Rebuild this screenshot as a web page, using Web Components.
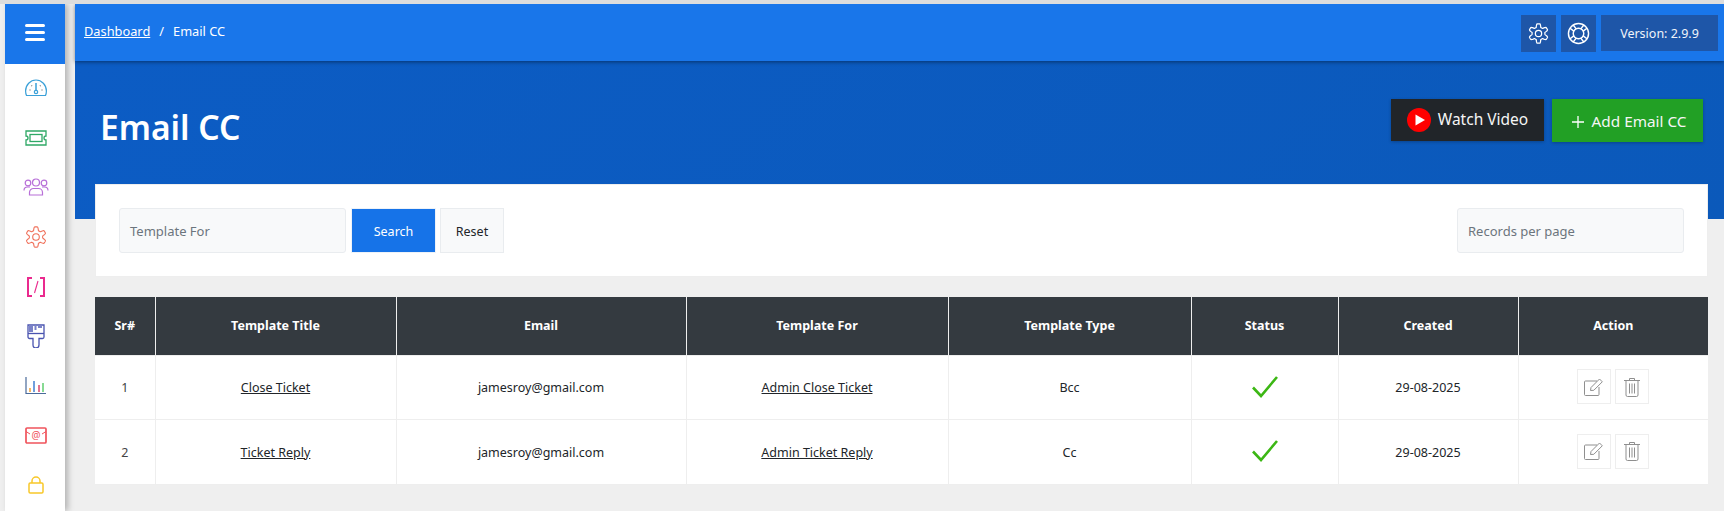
<!DOCTYPE html>
<html>
<head>
<meta charset="utf-8">
<title>Email CC</title>
<style>
  html, body { margin: 0; height: 100%; overflow: hidden; }
  body { background: #efefef; border-top: 4px solid #ddd; box-sizing: border-box; font-family: "Noto Sans", "Open Sans", sans-serif; }
</style>
</head>
<body>
<app-shell>
  <side-nav slot="nav">
    <nav-item><svg viewBox="0 0 22 18" width="22" height="18" fill="none" stroke="#3aa0d8" stroke-width="1.2"><path d="M1.500 16.500C.8 15 .6 13.500.6 12 .6 6 5.300 1 11 1s10.400 5 10.400 11c0 1.500-.2 3-.9 4.500z"/><path d="M11 4v7" stroke-width="1.500"/><circle cx="11" cy="13" r="1.700"/><path d="M4.500 11h1M16.500 11h1M6.500 6.500l.5.500M15.500 6.500l-.5.500" stroke="#555"/></svg></nav-item>
    <nav-item><svg viewBox="0 0 22 16" width="22" height="16" fill="none" stroke="#2fa866" stroke-width="1.300"><path d="M1 1h20v5a2 2 0 0 0 0 4v5H1v-5a2 2 0 0 0 0-4z"/><rect x="5" y="4.500" width="12" height="7"/></svg></nav-item>
    <nav-item><svg viewBox="0 0 26 18" width="26" height="18" fill="none" stroke="#b86fd8" stroke-width="1.200"><circle cx="13" cy="4.500" r="3.500"/><circle cx="5" cy="5" r="2.800"/><circle cx="21" cy="5" r="2.800"/><path d="M6.500 17v-2.500a4 4 0 0 1 4-4h5a4 4 0 0 1 4 4V17z"/><path d="M1 12.500c0-2 1.500-3.500 3.500-3.500H7M25 12.500c0-2-1.500-3.500-3.500-3.500H19"/></svg></nav-item>
    <nav-item><gear-icon size="22" colour="#f0705a" width="1.2"></gear-icon></nav-item>
    <nav-item><svg viewBox="0 0 18 20" width="18" height="20" fill="none" stroke="#ea2a8e" stroke-width="2"><path d="M5 1H1v18h4M13 1h4v18h-4"/><path d="M11 4 7.500 16" stroke-width="1.100"/></svg></nav-item>
    <nav-item><svg viewBox="0 0 18 24" width="18" height="24" fill="none" stroke="#4a54b0" stroke-width="1.300"><path d="M1 1h16v12a1.500 1.500 0 0 1-1.500 1.500H12v6.500a3 3 0 0 1-6 0v-6.500H2.500A1.500 1.500 0 0 1 1 13z"/><path d="M1 9.500h16"/><path d="M2 1h4v7H2zM7.500 1h2v5h-2zM11 1h4v3h-4z" fill="#7a82c8" stroke="none"/></svg></nav-item>
    <nav-item><svg viewBox="0 0 22 18" width="22" height="18" fill="none" stroke-width="1.500"><path d="M1 0v16.500h20" stroke="#4a6a9a" stroke-width="1.200"/><path d="M5 11v4" stroke="#f5a030"/><path d="M9 4v11" stroke="#3f7fd0"/><path d="M14 8v7" stroke="#d8456a"/><path d="M18 6v9" stroke="#5fce6f"/></svg></nav-item>
    <nav-item><svg viewBox="0 0 22 17" width="22" height="17" fill="none" stroke="#f0545c" stroke-width="1.700"><rect x="1" y="1" width="20" height="15" rx="1"/><path d="M1 4.500l4 2.500M21 4.500l-4 2.500" stroke-width="1"/><text x="11" y="12" text-anchor="middle" font-size="10" font-family="Noto Sans, sans-serif" fill="#f0545c" stroke="none">@</text></svg></nav-item>
    <nav-item><svg viewBox="0 0 16 18" width="16" height="18" fill="none" stroke="#f8c82a" stroke-width="1.500"><rect x="1" y="7" width="14" height="10" rx="1.200"/><path d="M4 7V5a4 4 0 0 1 8 0v2"/></svg></nav-item>
  </side-nav>
  <top-bar>
    <a slot="crumbs" href="#">Dashboard</a>
    <span slot="crumbs">/</span>
    <span slot="crumbs">Email CC</span>
    <tool-tile slot="tools"><gear-icon size="21" colour="#fff" width="1.4"></gear-icon></tool-tile>
    <tool-tile slot="tools"><svg viewBox="0 0 24 24" width="23" height="23" fill="none" stroke="#fff" stroke-width="1.500"><circle cx="12" cy="12" r="10.500"/><circle cx="12" cy="12" r="5.500"/><path d="M6.500 3.200l3.300 4.200M3.200 6.500l4.200 3.300M17.500 3.200l-3.300 4.200M20.800 6.500l-4.200 3.300M6.500 20.800l3.300-4.200M3.200 17.500l4.200-3.300M17.500 20.800l-3.300-4.200M20.800 17.500l-4.200-3.300"/></svg></tool-tile>
    <version-tag slot="tools">Version: 2.9.9</version-tag>
  </top-bar>
  <page-hero>
    <span slot="title">Email CC</span>
    <hero-button slot="actions" tone="dark"><svg slot="icon" viewBox="0 0 24 24" width="24" height="24"><circle cx="12" cy="12" r="12" fill="#f00"/><path d="M8.500 6.500 18 12l-9.500 5.500z" fill="#fff"/></svg>Watch Video</hero-button>
    <hero-button slot="actions" tone="green"><svg slot="icon" viewBox="0 0 12 12" width="12" height="12" stroke="#fff" stroke-width="1.300"><path d="M6 0v12M0 6h12"/></svg>Add Email CC</hero-button>
  </page-hero>
  <search-card></search-card>
  <cc-table></cc-table>
</app-shell>

<script>
  // outline of a six lobed gear, same for the sidebar and the top bar
  function gearPath() {
    let pts = [];
    for (let i = 0; i < 180; i++) {
      let a = i / 180 * Math.PI * 2;
      let t = Math.cos(a * 6);
      let r = 9.2 + 1.9 * Math.max(-1, Math.min(1, t * 1.7));
      pts.push((12 + r * Math.sin(a)).toFixed(2) + ' ' + (12 - r * Math.cos(a)).toFixed(2));
    }
    return 'M' + pts.join('L') + 'z';
  }

  class GearIcon extends HTMLElement {
    connectedCallback() {
      let s = this.getAttribute('size'), c = this.getAttribute('colour'), w = this.getAttribute('width');
      this.attachShadow({ mode: 'open' }).innerHTML = `
        <style>:host { display: inline-flex; }</style>
        <svg viewBox="0 0 24 24" width="${s}" height="${s}" fill="none" stroke="${c}" stroke-width="${w}">
          <path d="${gearPath()}"/>
          <circle cx="12" cy="12" r="3.600"/>
        </svg>`;
    }
  }

  class AppShell extends HTMLElement {
    connectedCallback() {
      this.attachShadow({ mode: 'open' }).innerHTML = `
        <style>
          :host { display: flex; height: 100%; padding-left: 5px; gap: 10px; box-sizing: border-box; }
          main { flex: 1; min-width: 0; display: flex; flex-direction: column; }
        </style>
        <slot name="nav"></slot>
        <main><slot></slot></main>`;
    }
  }

  class SideNav extends HTMLElement {
    connectedCallback() {
      this.attachShadow({ mode: 'open' }).innerHTML = `
        <style>
          :host { display: flex; flex-direction: column; width: 60px; background: #fff; box-shadow: 3px 0 6px rgba(0,0,0,.25); flex: none; z-index: 3; }
          .burger { height: 60px; flex: none; box-sizing: border-box; padding-bottom: 3px; background: #1976ea; display: flex; align-items: center; justify-content: center; }
          .items { margin-top: -1px; display: flex; flex-direction: column; }
        </style>
        <div class="burger">
          <svg width="20" height="17" viewBox="0 0 20 17" stroke="#fff" stroke-width="3" stroke-linecap="round"><path d="M1.500 1.500h17M1.500 8.500h17M1.500 15.500h17"/></svg>
        </div>
        <div class="items"><slot></slot></div>`;
    }
  }

  class NavItem extends HTMLElement {
    connectedCallback() {
      this.attachShadow({ mode: 'open' }).innerHTML = `
        <style>
          :host { display: flex; align-items: center; justify-content: center; height: 49.700px; margin-left: 2px; }
        </style>
        <slot></slot>`;
    }
  }

  class TopBar extends HTMLElement {
    connectedCallback() {
      this.attachShadow({ mode: 'open' }).innerHTML = `
        <style>
          :host { display: flex; align-items: center; justify-content: space-between; height: 57px; flex: none; background: #1976ea; color: #fff; font-size: 12.800px; padding: 0 6px 0 10px; box-shadow: 0 1px 4px rgba(0,0,0,.45); position: relative; z-index: 2; }
          .crumbs { display: flex; gap: 9px; margin: -4px 0 0 -1px; }
          .tools { display: flex; gap: 5px; align-items: flex-start; margin-top: 2px; }
          ::slotted(a) { color: #fff; }
        </style>
        <div class="crumbs"><slot name="crumbs"></slot></div>
        <div class="tools"><slot name="tools"></slot></div>`;
    }
  }

  class ToolTile extends HTMLElement {
    connectedCallback() {
      this.attachShadow({ mode: 'open' }).innerHTML = `
        <style>:host { display: flex; align-items: center; justify-content: center; width: 35px; height: 37px; background: #1e56a8; }</style>
        <slot></slot>`;
    }
  }

  class VersionTag extends HTMLElement {
    connectedCallback() {
      this.attachShadow({ mode: 'open' }).innerHTML = `
        <style>:host { display: flex; align-items: center; justify-content: center; width: 117px; height: 36px; background: #1e56a8; color: #f0f4fa; font-size: 12.500px; }</style>
        <slot></slot>`;
    }
  }

  class PageHero extends HTMLElement {
    connectedCallback() {
      this.attachShadow({ mode: 'open' }).innerHTML = `
        <style>
          :host { display: flex; justify-content: space-between; height: 158px; flex: none; box-sizing: border-box; background: linear-gradient(135deg, #0c5cc4, #0b59ba); color: #fff; padding: 38px 21px 0 25px; }
          h1 { margin: 0; font-size: 33.600px; font-weight: 600; line-height: 56px; }
          .actions { display: flex; gap: 8px; align-items: flex-start; }
        </style>
        <h1><slot name="title"></slot></h1>
        <div class="actions"><slot name="actions"></slot></div>`;
    }
  }

  class HeroButton extends HTMLElement {
    connectedCallback() {
      let dark = this.getAttribute('tone') == 'dark';
      this.attachShadow({ mode: 'open' }).innerHTML = `
        <style>
          :host { display: flex; align-items: center; justify-content: center; box-sizing: border-box; height: ${dark ? 42 : 43}px; width: ${dark ? 153 : 151}px; padding-left: ${dark ? 0 : 3}px; gap: ${dark ? 7 : 8}px; background: ${dark ? '#212529' : '#22a025'}; color: #f5f5f5; font-size: ${dark ? 15.5 : 15.3}px; box-shadow: 0 1px 3px rgba(0,0,0,.25); }
          span { display: block; ${dark ? 'margin-top: -2px;' : ''} }
          .i { display: flex; ${dark ? '' : 'margin-top: 3px;'} }
        </style>
        <div class="i"><slot name="icon"></slot></div><span><slot></slot></span>`;
    }
  }

  class SearchCard extends HTMLElement {
    connectedCallback() {
      this.attachShadow({ mode: 'open' }).innerHTML = `
        <style>
          :host { display: flex; justify-content: space-between; align-items: flex-start; margin: -35px 16px 0 20px; height: 93px; box-sizing: border-box; padding: 23px 23px 0 23px; background: #fff; border: 1px solid #eee; flex: none; position: relative; font-size: 13px; }
          .left { display: flex; }
          .field { width: 227px; height: 45px; box-sizing: border-box; background: #f8f9fa; border: 1px solid #e9ecef; border-radius: 3px; color: #6c757d; padding-left: 10px; display: flex; align-items: center; }
          .btn { height: 45px; box-sizing: border-box; padding-top: 1px; display: flex; align-items: center; justify-content: center; font-size: 12.500px; }
          .go { width: 85px; margin-left: 5px; background: #1673e8; color: #fff; border: 1px solid #edf2f8; }
          .reset { width: 64px; margin-left: 4px; background: #f8f9fa; color: #212529; border: 1px solid #e9ecef; }
        </style>
        <div class="left">
          <div class="field">Template For</div>
          <div class="btn go">Search</div>
          <div class="btn reset">Reset</div>
        </div>
        <div class="field">Records per page</div>`;
    }
  }

  const rows = [
    ['1', 'Close Ticket', 'jamesroy@gmail.com', 'Admin Close Ticket', 'Bcc', '29-08-2025'],
    ['2', 'Ticket Reply', 'jamesroy@gmail.com', 'Admin Ticket Reply', 'Cc', '29-08-2025']
  ];

  class CcTable extends HTMLElement {
    connectedCallback() {
      let check = `<svg width="26" height="24" viewBox="0 0 26 24" fill="none" stroke="#3cb714" stroke-width="2.600"><path d="M1 12.500 9 21 25 2"/></svg>`;
      let edit = `<svg width="20" height="18" viewBox="0 0 20 18" fill="none" stroke="#8f8f8f" stroke-width="1"><path d="M13 3H1.500a1 1 0 0 0-1 1v12.500a1 1 0 0 0 1 1h12.500a1 1 0 0 0 1-1V9"/><path d="M6.500 12.500 7 9.500 15.500 1l2.800 2.800-8.500 8.500z"/></svg>`;
      let trash = `<svg width="18" height="20" viewBox="0 0 18 20" fill="none" stroke="#8f8f8f" stroke-width="1"><path d="M1 3.500h16M6.500 3.500V1.500h5v2M3 3.500V18a1.500 1.500 0 0 0 1.500 1.500h9A1.500 1.500 0 0 0 15 18V3.500"/><path d="M6.500 6.500v10M9 6.500v10M11.500 6.500v10"/></svg>`;
      let body = rows.map(r => `
        <tr>
          <td>${r[0]}</td>
          <td><a href="#">${r[1]}</a></td>
          <td>${r[2]}</td>
          <td><a href="#">${r[3]}</a></td>
          <td>${r[4]}</td>
          <td><div class="chk">${check}</div></td>
          <td>${r[5]}</td>
          <td><div class="acts"><span>${edit}</span><span>${trash}</span></div></td>
        </tr>`).join('');
      this.attachShadow({ mode: 'open' }).innerHTML = `
        <style>
          :host { display: block; margin: 20px 16px 0 20px; flex: none; font-size: 12.500px; color: #212529; }
          table { width: 100%; table-layout: fixed; border-collapse: collapse; background: #fff; }
          th { height: 58px; background: #343a40; color: #fff; font-size: 12.500px; font-weight: 700; border-left: 1px solid #eee; padding: 0; box-sizing: border-box; }
          th:first-child { border-left: 0; }
          td { height: 64.500px; text-align: center; padding: 1px 0 0; box-sizing: border-box; border: 1px solid #eee; }
          td:first-child { border-left: 0; color: #444; }
          td:last-child { border-right: 0; }
          a { color: #212529; }
          .chk { display: flex; justify-content: center; margin-top: -2px; }
          .acts { display: flex; justify-content: center; gap: 4px; margin-top: -2px; }
          .acts span { width: 34px; height: 35px; box-sizing: border-box; border: 1px solid #eee; display: flex; align-items: center; justify-content: center; }
        </style>
        <table>
          <colgroup><col style="width:60px"><col style="width:241px"><col style="width:290px"><col style="width:262px"><col style="width:243px"><col style="width:147px"><col style="width:180px"><col></colgroup>
          <thead><tr><th>Sr#</th><th>Template Title</th><th>Email</th><th>Template For</th><th>Template Type</th><th>Status</th><th>Created</th><th>Action</th></tr></thead>
          <tbody>${body}</tbody>
        </table>`;
    }
  }

  customElements.define('gear-icon', GearIcon);
  customElements.define('app-shell', AppShell);
  customElements.define('side-nav', SideNav);
  customElements.define('nav-item', NavItem);
  customElements.define('top-bar', TopBar);
  customElements.define('tool-tile', ToolTile);
  customElements.define('version-tag', VersionTag);
  customElements.define('page-hero', PageHero);
  customElements.define('hero-button', HeroButton);
  customElements.define('search-card', SearchCard);
  customElements.define('cc-table', CcTable);
</script>
</body>
</html>
